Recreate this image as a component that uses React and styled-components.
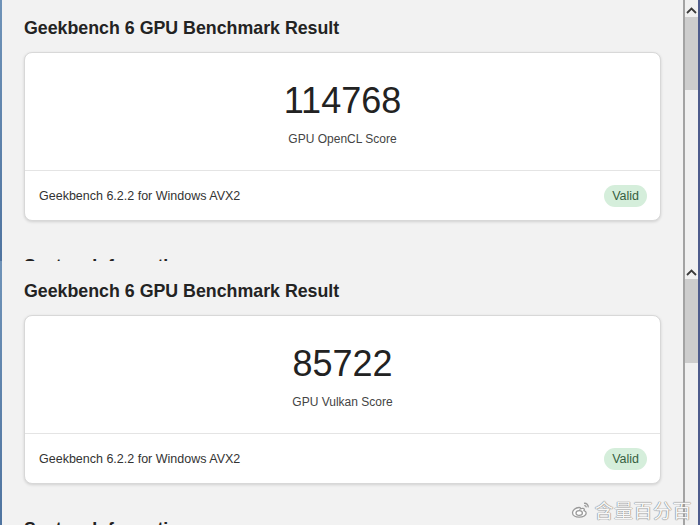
import React from "react";
import styled, { createGlobalStyle } from "styled-components";

const Global = createGlobalStyle`
  html, body { margin: 0; padding: 0; background: #f2f2f2; }
  body { font-family: "Liberation Sans", Arial, sans-serif; }
  * { box-sizing: border-box; }
`;

const Screen = styled.div`
  position: relative;
  width: 700px;
  height: 525px;
  overflow: hidden;
  display: flex;
  flex-direction: column;
`;

const Panel = styled.div`
  height: ${(p) => p.$h}px;
  flex: none;
  display: flex;
  overflow: hidden;
`;

const LeftEdge = styled.div`
  width: 2px;
  flex: none;
  background: linear-gradient(#6f93b8, #4f74a0);
`;

const Content = styled.div`
  flex: 1;
  background: #f2f2f2;
  padding: ${(p) => p.$top}px 22px 0 22px;
  display: flex;
  flex-direction: column;
`;

const Title = styled.h2`
  margin: 0;
  font-size: 17.8px;
  line-height: 22px;
  font-weight: 700;
  color: #232323;
`;

const Card = styled.div`
  margin-top: 13px;
  background: #fff;
  border: 1px solid #d8d8d8;
  border-radius: 8px;
  box-shadow: 0 1px 3px rgba(0, 0, 0, 0.14);
  display: flex;
  flex-direction: column;
`;

const ScoreArea = styled.div`
  padding: 28px 0 23px;
  display: flex;
  flex-direction: column;
  align-items: center;
  border-bottom: 1px solid #e4e4e4;
`;

const Score = styled.div`
  font-size: 36px;
  line-height: 40px;
  color: #222;
  font-weight: 400;
`;

const ScoreLabel = styled.div`
  margin-top: 10px;
  font-size: 12px;
  line-height: 16px;
  color: #444;
`;

const Footer = styled.div`
  height: 49px;
  padding: 0 13px 0 14px;
  display: flex;
  align-items: center;
  justify-content: space-between;
`;

const Version = styled.span`
  font-size: 12.5px;
  color: #333;
`;

const Badge = styled.span`
  height: 22px;
  padding: 0 8px;
  border-radius: 11px;
  background: #d5eedb;
  color: #36603f;
  font-size: 12.5px;
  line-height: 22px;
`;

const SectionHead = styled.h2`
  margin: 34px 0 0;
  font-size: 17.8px;
  line-height: 22px;
  font-weight: 700;
  color: #232323;
`;

const Divider = styled.div`
  width: 2px;
  flex: none;
  background: #a3a3a3;
`;

const Scrollbar = styled.div`
  width: 13px;
  flex: none;
  background: #f0f0f0;
  display: flex;
  flex-direction: column;
  align-items: stretch;
  padding-top: ${(p) => p.$pad}px;
`;

const Arrow = styled.svg`
  display: block;
  margin: 0 auto;
  flex: none;
`;

const Thumb = styled.div`
  margin-top: ${(p) => p.$gap}px;
  height: ${(p) => p.$len}px;
  background: #cdcdcd;
  flex: none;
`;

const RightEdge = styled.div`
  width: 2px;
  flex: none;
  background: #4d5b8c;
`;

const Watermark = styled.div`
  position: absolute;
  right: 8px;
  bottom: 4px;
  display: flex;
  align-items: center;
  gap: 3px;
`;

const WatermarkText = styled.span`
  font-family: "Noto Sans CJK SC", sans-serif;
  font-size: 19px;
  line-height: 22px;
  letter-spacing: 0.5px;
  color: rgba(255, 255, 255, 0.95);
  text-shadow: 0 0 1px #8a8a8a, 0 0 1px #8a8a8a, 0 0 1px #9a9a9a;
`;

function WeiboLogo() {
  return (
    <svg width="20" height="18" viewBox="0 0 20 18">
      <g fill="none" stroke="#9a9a9a" strokeWidth="1.3">
        <path d="M8 6.5c-3.5 0.3-6.5 2.8-6.5 5.3 0 2.6 3 4.4 6.7 4.4 4 0 7-1.9 7-4.3 0-1.5-1.3-2-2.2-2.3 0.6-1.2 0.4-2.4-1.6-2.2-1.1 0.1-2.2 0.6-2.2 0.6 0.4-1.2 0-1.9-1.2-1.5z" fill="rgba(255,255,255,0.9)" />
        <ellipse cx="8.2" cy="12" rx="3.2" ry="2.4" />
        <path d="M13 2.3c2.4-0.4 4.6 1.6 4.2 4.1" />
        <path d="M13.3 4.6c1.1-0.2 2 0.7 1.8 1.8" />
      </g>
    </svg>
  );
}

function Result({ score, label, h, top, thumbGap, thumbLen, pad }) {
  return (
    <Panel $h={h}>
      <LeftEdge />
      <Content $top={top}>
        <Title>Geekbench 6 GPU Benchmark Result</Title>
        <Card>
          <ScoreArea>
            <Score>{score}</Score>
            <ScoreLabel>{label}</ScoreLabel>
          </ScoreArea>
          <Footer>
            <Version>Geekbench 6.2.2 for Windows AVX2</Version>
            <Badge>Valid</Badge>
          </Footer>
        </Card>
        <SectionHead>System Information</SectionHead>
      </Content>
      <Divider />
      <Scrollbar $pad={pad}>
        <Arrow width="11" height="7" viewBox="0 0 11 7">
          <path d="M1 6 L5.5 1.5 L10 6" fill="none" stroke="#3a3a3a" strokeWidth="1.8" />
        </Arrow>
        <Thumb $gap={thumbGap} $len={thumbLen} />
      </Scrollbar>
      <RightEdge />
    </Panel>
  );
}

export default function App() {
  return (
    <>
      <Global />
      <Screen>
        <Result score="114768" label="GPU OpenCL Score" h={261} top={17} pad={7} thumbGap={3} thumbLen={73} />
        <Result score="85722" label="GPU Vulkan Score" h={264} top={19} pad={8} thumbGap={3} thumbLen={84} />
        <Watermark>
          <WeiboLogo />
          <WatermarkText>含量百分百</WatermarkText>
        </Watermark>
      </Screen>
    </>
  );
}
